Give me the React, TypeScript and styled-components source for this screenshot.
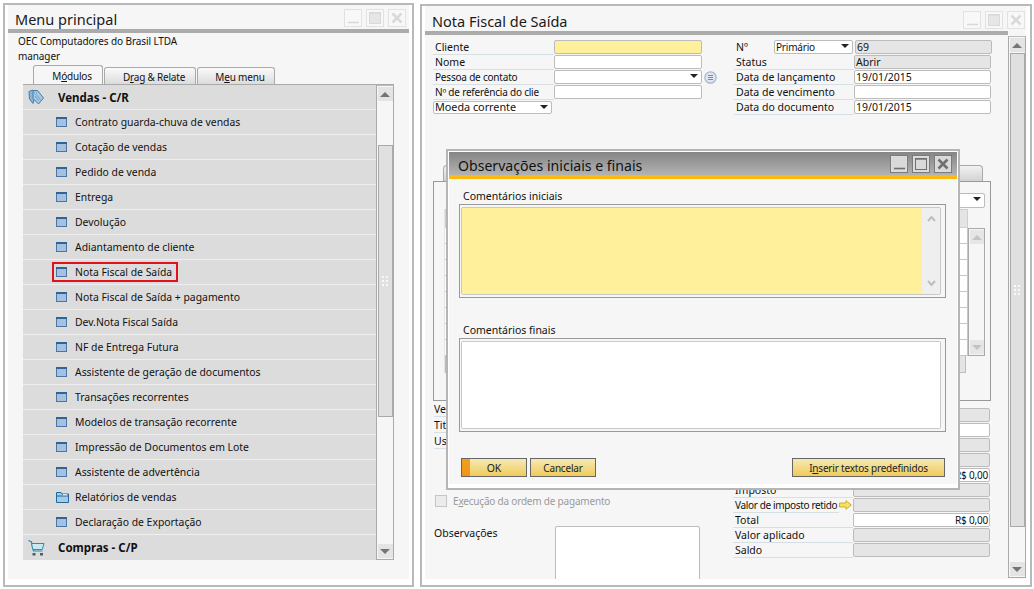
import React from 'react';
import styled, { createGlobalStyle } from 'styled-components';

const GlobalStyle = createGlobalStyle`
  html, body {
    margin: 0;
    padding: 0;
    background: #fff;
  }
  *, *::before, *::after {
    box-sizing: border-box;
  }
  #root {
    width: 1034px;
    height: 589px;
    overflow: hidden;
  }
`;

const menuItems = [
  'Contrato guarda-chuva de vendas',
  'Cotação de vendas',
  'Pedido de venda',
  'Entrega',
  'Devolução',
  'Adiantamento de cliente',
  'Nota Fiscal de Saída',
  'Nota Fiscal de Saída + pagamento',
  'Dev.Nota Fiscal Saída',
  'NF de Entrega Futura',
  'Assistente de geração de documentos',
  'Transações recorrentes',
  'Modelos de transação recorrente',
  'Impressão de Documentos em Lote',
  'Assistente de advertência',
  'Relatórios de vendas',
  'Declaração de Exportação',
];

const WindowGlyph = () => (
  <svg width="11" height="10" viewBox="0 0 11 10">
    <rect x="0.5" y="0.5" width="10" height="9" fill="#a5c1df" stroke="#4b76a3" />
    <rect x="0" y="0" width="11" height="2" fill="#2f6496" />
  </svg>
);

const FolderGlyph = () => (
  <svg width="13" height="11" viewBox="0 0 13 11">
    <path d="M0.5 10.5V0.5H5L6 2H12.5V10.5Z" fill="#a5c9e6" stroke="#1f6a9c" />
    <path d="M1 4H12" stroke="#1f6a9c" />
    <path d="M7 2.8H11" stroke="#fff" />
  </svg>
);

const TagsGlyph = () => (
  <svg width="16" height="16" viewBox="0 0 16 16">
    <path d="M1 2.5L5 1L8 4L5 14.5L1.5 10Z" fill="#8fb3d3" stroke="#3f7fae" />
    <path d="M5 1.5L9.5 1.5L15.5 9L10.5 15L5 9.5Z" fill="#a9c8e2" stroke="#3f7fae" />
    <circle cx="7.5" cy="4" r="1" fill="#fff" stroke="#3f7fae" strokeWidth="0.6" />
    <path d="M7 7L11 12M8.5 6L12.5 10.5" stroke="#5f96bf" strokeWidth="0.8" />
  </svg>
);

const CartGlyph = () => (
  <svg width="17" height="16" viewBox="0 0 17 16">
    <path d="M0.5 0.5L3.5 2L5.5 11H14.5" fill="none" stroke="#1f93b5" strokeWidth="1.2" />
    <path d="M3.5 3.5H16L14.3 9.5H4.8Z" fill="#cfe6ee" stroke="#1f93b5" />
    <rect x="4.5" y="13" width="3" height="2.5" fill="#4b5f68" />
    <rect x="12" y="13" width="3" height="2.5" fill="#4b5f68" />
  </svg>
);

const ArrowGlyph = () => (
  <svg width="13" height="10" viewBox="0 0 13 10">
    <path d="M0.5 3H7V0.7L12.3 5L7 9.3V7H0.5Z" fill="#f6e25c" stroke="#d3ad2b" />
  </svg>
);

const SmallChevron = ({ down }: { down?: boolean }) => (
  <svg width="9" height="7" viewBox="0 0 9 7">
    <path d={down ? 'M1 1L4.5 5L8 1' : 'M1 6L4.5 2L8 6'} fill="none" stroke="#bdbdbd" strokeWidth="2" />
  </svg>
);

const ListGlyph = () => (
  <svg width="13" height="13" viewBox="0 0 13 13">
    <circle cx="6.5" cy="6.5" r="5.7" fill="#dfe6f2" stroke="#a9b7cf" strokeWidth="1.2" />
    <path d="M4 4.5H9M4 6.5H9M4 8.5H9" stroke="#7d8aa0" />
  </svg>
);

const WindowButtons = ({ active }: { active?: boolean }) => (
  <ButtonRow>
    <WindowButton $active={active}>
      <svg width="14" height="14" viewBox="0 0 14 14">
        <path d="M2 11.5H13" stroke="currentColor" strokeWidth="1.6" />
      </svg>
    </WindowButton>
    <WindowButton $active={active}>
      <svg width="14" height="14" viewBox="0 0 14 14">
        <rect x="1.5" y="1.5" width="11" height="11" fill={active ? 'none' : '#e6e6e6'} stroke="currentColor" />
        <path d="M1.5 2H12.5" stroke="currentColor" strokeWidth="1.4" />
      </svg>
    </WindowButton>
    <WindowButton $active={active}>
      <svg width="14" height="14" viewBox="0 0 14 14">
        <path d="M2.5 2.5L11.5 11.5M11.5 2.5L2.5 11.5" stroke="currentColor" strokeWidth="2.6" />
      </svg>
    </WindowButton>
  </ButtonRow>
);

const Scroll = ({
  thumbTop,
  thumbHeight,
  grip,
}: {
  thumbTop: number;
  thumbHeight: number;
  grip?: boolean;
}) => (
  <ScrollRail>
    <ScrollButton>
      <ArrowUp />
    </ScrollButton>
    <ScrollThumb $top={thumbTop} $height={thumbHeight}>
      {grip && <Grip />}
    </ScrollThumb>
    <ScrollSpring />
    <ScrollButton>
      <ArrowDown />
    </ScrollButton>
  </ScrollRail>
);

const MainMenu = () => (
  <MenuWindow>
    <Panel>
      <TitleBar>
        <Title>Menu principal</Title>
        <WindowButtons />
      </TitleBar>
      <MenuHead>
        <div>OEC Computadores do Brasil LTDA</div>
        <div>manager</div>
      </MenuHead>
      <TabStrip>
        <MenuTab $active $width={70}>
          <Tight>
            M<u>ó</u>dulos
          </Tight>
        </MenuTab>
        <MenuTab $width={92}>
          <Tight>
            D<u>r</u>ag &amp; Relate
          </Tight>
        </MenuTab>
        <MenuTab $width={78}>
          <Tight>
            M<u>e</u>u menu
          </Tight>
        </MenuTab>
      </TabStrip>
      <ListFrame>
        <MenuList>
          <SectionRow>
            <SectionIcon>
              <TagsGlyph />
            </SectionIcon>
            Vendas - C/R
          </SectionRow>
          {menuItems.map((item, index) => (
            <MenuRow key={item}>
              <MenuLabel $marked={index === 6}>
                <MenuIcon>{item === 'Relatórios de vendas' ? <FolderGlyph /> : <WindowGlyph />}</MenuIcon>
                {item}
              </MenuLabel>
            </MenuRow>
          ))}
          <SectionRow>
            <SectionIcon>
              <CartGlyph />
            </SectionIcon>
            Compras - C/P
          </SectionRow>
        </MenuList>
        <Scroll thumbTop={44} thumbHeight={272} grip />
      </ListFrame>
    </Panel>
  </MenuWindow>
);

const InvoiceWindow = () => (
  <DocWindow>
    <DocPanel>
      <DocMain>
        <TitleBar $ruleRight={20}>
          <Title>Nota Fiscal de Saída</Title>
          <WindowButtons />
        </TitleBar>
        <TopForm>
          <FormColumn $width={301}>
            <FormRow>
              <FieldLabel $width={121}>Cliente</FieldLabel>
              <Field $width={148} $tone="yellow" />
            </FormRow>
            <FormRow>
              <FieldLabel $width={121}>Nome</FieldLabel>
              <Field $width={148} />
            </FormRow>
            <FormRow>
              <FieldLabel $width={121}>
                <Tight>Pessoa de contato</Tight>
              </FieldLabel>
              <Field $width={148}>
                <Caret />
              </Field>
              <ContactIcon>
                <ListGlyph />
              </ContactIcon>
            </FormRow>
            <FormRow>
              <FieldLabel $width={121}>
                <Tight>Nº de referência do clie</Tight>
              </FieldLabel>
              <Field $width={148} />
            </FormRow>
            <FormRow>
              <CurrencySelect>
                Moeda corrente
                <Caret />
              </CurrencySelect>
            </FormRow>
          </FormColumn>
          <FormColumn $width={260}>
            <FormRow>
              <FieldLabel $width={40} $plain>
                Nº
              </FieldLabel>
              <Field $width={79}>
                <Tight>Primário</Tight>
                <Caret />
              </Field>
              <Field $width={137} $tone="gray" $gap>
                69
              </Field>
            </FormRow>
            <FormRow>
              <FieldLabel $width={120}>Status</FieldLabel>
              <Field $width={137} $tone="gray">
                Abrir
              </Field>
            </FormRow>
            <FormRow>
              <FieldLabel $width={120}>Data de lançamento</FieldLabel>
              <Field $width={137}>19/01/2015</Field>
            </FormRow>
            <FormRow>
              <FieldLabel $width={120}>Data de vencimento</FieldLabel>
              <Field $width={137} />
            </FormRow>
            <FormRow>
              <FieldLabel $width={120}>Data do documento</FieldLabel>
              <Field $width={137}>19/01/2015</Field>
            </FormRow>
          </FormColumn>
        </TopForm>
        <TabsBlock>
          <BackTabs>
            <BackTab $width={80} />
            <BackTab $width={60} />
          </BackTabs>
          <BackFrame>
            <FrameSelect>
              <Caret />
            </FrameSelect>
            <GridRow>
              <GridTable>
                <GridHead />
                {Array.from({ length: 8 }, (_, i) => (
                  <GridLine key={i} />
                ))}
                <GridFoot />
              </GridTable>
              <GridScroll>
                <GridScrollButton>
                  <ArrowUp $light />
                </GridScrollButton>
                <GridScrollButton>
                  <ArrowDown $light />
                </GridScrollButton>
              </GridScroll>
            </GridRow>
          </BackFrame>
        </TabsBlock>
        <LowerForm>
          <LowerLeft>
            <ShortRow>Ve</ShortRow>
            <ShortRow>Tit</ShortRow>
            <ShortRow>Us</ShortRow>
            <PaymentRow>
              <CheckBox />
              <Tight>
                E<u>x</u>ecução da ordem de pagamento
              </Tight>
            </PaymentRow>
            <NotesRow>
              <NotesLabel>Observações</NotesLabel>
              <NotesBox />
            </NotesRow>
          </LowerLeft>
          <LowerRight>
            <FormRow>
              <FieldLabel $width={120} />
              <Field $width={137} $tone="gray" />
            </FormRow>
            <FormRow>
              <FieldLabel $width={120} />
              <Field $width={137} />
            </FormRow>
            <FormRow>
              <FieldLabel $width={120} />
              <Field $width={137} $tone="gray" />
            </FormRow>
            <FormRow>
              <FieldLabel $width={120} />
              <Field $width={137} $tone="gray" />
            </FormRow>
            <FormRow>
              <FieldLabel $width={120} />
              <Field $width={137} $align="right">
                <Tight>R$ 0,00</Tight>
              </Field>
            </FormRow>
            <FormRow>
              <FieldLabel $width={120}>Imposto</FieldLabel>
              <Field $width={137} $tone="gray" />
            </FormRow>
            <FormRow>
              <FieldLabel $width={106}>
                <Narrow>Valor de imposto retido</Narrow>
              </FieldLabel>
              <LinkArrow>
                <ArrowGlyph />
              </LinkArrow>
              <Field $width={137} $tone="gray" />
            </FormRow>
            <FormRow>
              <FieldLabel $width={120}>Total</FieldLabel>
              <Field $width={137} $align="right">
                <Tight>R$ 0,00</Tight>
              </Field>
            </FormRow>
            <FormRow>
              <FieldLabel $width={120}>Valor aplicado</FieldLabel>
              <Field $width={137} $tone="gray" />
            </FormRow>
            <FormRow>
              <FieldLabel $width={120}>Saldo</FieldLabel>
              <Field $width={137} $tone="gray" />
            </FormRow>
          </LowerRight>
        </LowerForm>
      </DocMain>
      <PageScroll>
        <Scroll thumbTop={1} thumbHeight={474} grip />
      </PageScroll>
    </DocPanel>
    <Dialog>
      <DialogTitle>
        <DialogHeading>Observações iniciais e finais</DialogHeading>
        <WindowButtons active />
      </DialogTitle>
      <DialogBody>
        <BoxLabel>Comentários iniciais</BoxLabel>
        <TextBox>
          <TextBoxInner>
            <TextArea $tone="yellow" />
            <TextScroll>
              <SmallChevron />
              <SmallChevron down />
            </TextScroll>
          </TextBoxInner>
        </TextBox>
        <BoxLabel $spaced>Comentários finais</BoxLabel>
        <TextBox>
          <TextBoxInner>
            <TextArea />
          </TextBoxInner>
        </TextBox>
        <DialogActions>
          <ActionGroup>
            <ActionButton $primary $width={66}>
              OK
            </ActionButton>
            <ActionButton $width={66}>
              <Tight>Cancelar</Tight>
            </ActionButton>
          </ActionGroup>
          <ActionButton $width={153}>
            <Tight>
              I<u>n</u>serir textos predefinidos
            </Tight>
          </ActionButton>
        </DialogActions>
      </DialogBody>
    </Dialog>
  </DocWindow>
);

export default function App() {
  return (
    <>
      <GlobalStyle />
      <Desktop>
        <MainMenu />
        <InvoiceWindow />
      </Desktop>
    </>
  );
}

const uiFont = `"Noto Sans", "Open Sans", sans-serif`;

const Desktop = styled.div`
  width: 1034px;
  height: 589px;
  display: flex;
  align-items: flex-end;
  gap: 6px;
  padding: 0 2px 2px 3px;
  font-family: ${uiFont};
  font-size: 10.5px;
  color: #111;
`;

const Tight = styled.span`
  font-size: 10px;
  letter-spacing: -0.2px;
`;

const Narrow = styled(Tight)`
  letter-spacing: -0.35px;
`;

const MenuWindow = styled.section`
  width: 411px;
  height: 584px;
  border: 2px solid #b9b9b9;
  background: #fff;
  padding: 0 3px 6px 3px;
`;

const DocWindow = styled.section`
  position: relative;
  width: 612px;
  height: 583px;
  border: 2px solid #b9b9b9;
  background: #fff;
  padding: 0 4px 6px 3px;
`;

const Panel = styled.div`
  height: 100%;
  background: #f6f6f6;
`;

const DocPanel = styled.div`
  height: 100%;
  display: flex;
  background: #f6f6f6;
`;

const DocMain = styled.div`
  width: 583px;
  flex: none;
  height: 100%;
  display: flex;
  flex-direction: column;
`;

const TitleBar = styled.header<{ $ruleRight?: number }>`
  height: ${({ $ruleRight }) => ($ruleRight ? 25 : 24)}px;
  flex: none;
  margin-right: ${({ $ruleRight }) => ($ruleRight ? -$ruleRight : 0)}px;
  position: relative;
  display: flex;
  align-items: center;
  justify-content: space-between;
  padding: 2px 3px 0 7px;

  &::after {
    content: '';
    position: absolute;
    left: 0;
    right: ${({ $ruleRight }) => $ruleRight ?? 0}px;
    bottom: -4px;
    height: 4px;
    background: #ababab;
  }
`;

const Title = styled.h1`
  margin: 0;
  padding-top: 2px;
  font-size: 14.5px;
  font-weight: 400;
  color: #1a1a1a;
`;

const ButtonRow = styled.div`
  display: flex;
  gap: 4px;
`;

const WindowButton = styled.span<{ $active?: boolean }>`
  width: 18px;
  height: 18px;
  display: flex;
  align-items: center;
  justify-content: center;
  border: 1px solid ${({ $active }) => ($active ? '#7a7a7a' : '#e2e2e2')};
  outline: ${({ $active }) => ($active ? '1px solid #ddd' : 'none')};
  outline-offset: -2px;
  background: ${({ $active }) => ($active ? '#d9d9d9' : '#f8f8f8')};
  color: ${({ $active }) => ($active ? '#6f6f6f' : '#d9d9d9')};
`;

const MenuHead = styled.div`
  padding: 5px 0 0 10px;
  height: 37px;
  line-height: 15px;
  font-size: 10px;
  letter-spacing: -0.1px;
`;

const TabStrip = styled.nav`
  display: flex;
  gap: 1px;
  margin-left: 25px;
  align-items: flex-end;
  height: 18px;
`;

const MenuTab = styled.span<{ $active?: boolean; $width: number }>`
  width: ${({ $width }) => $width}px;
  height: ${({ $active }) => ($active ? 19 : 17)}px;
  text-align: center;
  padding-left: 8px;
  line-height: ${({ $active }) => ($active ? 20 : 18)}px;
  border: 1px solid #a9a9a9;
  border-bottom: none;
  border-radius: 3px 3px 0 0;
  background: ${({ $active }) => ($active ? '#f6f6f6' : 'linear-gradient(#fafafa, #dcdcdc)')};
  position: relative;
  z-index: ${({ $active }) => ($active ? 1 : 0)};
`;

const ListFrame = styled.div`
  display: flex;
  width: 371px;
  height: 476px;
  margin-left: 15px;
  border-top: 1px solid #a9a9a9;
`;

const MenuList = styled.div`
  width: 353px;
  flex: none;
  background: #dcdcdc;
  font-size: 10.4px;
`;

const SectionRow = styled.div`
  height: 25px;
  display: flex;
  align-items: center;
  font-size: 11.5px;
  font-weight: 700;
  border-bottom: 1px solid #efefef;

  &:last-child {
    border-bottom: none;
  }
`;

const SectionIcon = styled.span`
  width: 35px;
  padding-left: 5px;
  display: flex;
  align-items: center;
`;

const MenuRow = styled.div`
  height: 25px;
  display: flex;
  align-items: center;
  padding-left: 29px;
  border-bottom: 1px solid #efefef;
`;

const MenuLabel = styled.span<{ $marked?: boolean }>`
  position: relative;
  display: flex;
  align-items: center;
  padding-left: 4px;

  ${({ $marked }) =>
    $marked &&
    `&::after {
      content: '';
      position: absolute;
      left: 0;
      top: -3px;
      width: 126px;
      height: 20px;
      border: 2px solid #e2111b;
    }`}
`;

const MenuIcon = styled.span`
  width: 19px;
  display: flex;
  align-items: center;
`;

const ScrollRail = styled.div`
  width: 18px;
  flex: none;
  height: 100%;
  display: flex;
  flex-direction: column;
  align-items: center;
  padding: 1px 0;
  background: #f6f6f6;
  border: 1px solid #aaa;
  border-top-color: #bbb;
`;

const ScrollButton = styled.span`
  width: 15px;
  height: 14px;
  flex: none;
  display: flex;
  align-items: center;
  justify-content: center;
  background: #e4e4e4;
`;

const ArrowUp = styled.span<{ $light?: boolean }>`
  width: 0;
  height: 0;
  border-left: 5px solid transparent;
  border-right: 5px solid transparent;
  border-bottom: 5px solid ${({ $light }) => ($light ? '#c4c4c4' : '#757575')};
`;

const ArrowDown = styled.span<{ $light?: boolean }>`
  width: 0;
  height: 0;
  border-left: 5px solid transparent;
  border-right: 5px solid transparent;
  border-top: 5px solid ${({ $light }) => ($light ? '#c4c4c4' : '#757575')};
`;

const ScrollThumb = styled.div<{ $top: number; $height: number }>`
  width: 15px;
  flex: none;
  height: ${({ $height }) => $height}px;
  margin-top: ${({ $top }) => $top}px;
  border: 1px solid #a9a9a9;
  background: #e0e0e0;
  display: flex;
  align-items: center;
  justify-content: center;
`;

const Grip = styled.span`
  width: 8px;
  height: 12px;
  background: radial-gradient(circle, #f8f8f8 0 1.2px, transparent 1.3px) 0 0 / 4px 4px;
`;

const ScrollSpring = styled.div`
  flex: 1;
`;

const PageScroll = styled.div`
  width: 18px;
  flex: none;
  height: 542px;
  margin-top: 30px;
`;

const TopForm = styled.div`
  display: flex;
  flex: none;
  padding: 9px 0 0 8px;
  height: 78px;
`;

const FormColumn = styled.div<{ $width: number }>`
  width: ${({ $width }) => $width}px;
  display: flex;
  flex-direction: column;
`;

const FormRow = styled.div`
  height: 15px;
  display: flex;
  flex: none;
`;

const FieldLabel = styled.span<{ $width: number; $plain?: boolean }>`
  width: ${({ $width }) => $width}px;
  flex: none;
  height: 15px;
  line-height: 15px;
  padding-left: 2px;
  white-space: nowrap;
  overflow: hidden;
  border-bottom: 1px solid ${({ $plain }) => ($plain ? 'transparent' : '#d6dfe3')};
`;

const toneColors: Record<string, string> = {
  yellow: '#fff09c',
  gray: '#e5e5e5',
  white: '#fff',
};

const Field = styled.div<{
  $width: number;
  $tone?: 'yellow' | 'gray' | 'white';
  $align?: 'right';
  $gap?: boolean;
}>`
  position: relative;
  width: ${({ $width }) => $width}px;
  flex: none;
  height: 14px;
  line-height: 12px;
  padding: 0 1px;
  margin-left: ${({ $gap }) => ($gap ? 2 : 0)}px;
  border: 1px solid #bcbcbc;
  border-radius: 2px;
  text-align: ${({ $align }) => $align ?? 'left'};
  background: ${({ $tone }) => toneColors[$tone ?? 'white']};
  overflow: hidden;
`;

const Caret = styled.span`
  position: absolute;
  right: 3px;
  top: 3px;
  width: 0;
  height: 0;
  border-left: 4px solid transparent;
  border-right: 4px solid transparent;
  border-top: 4px solid #222;
`;

const ContactIcon = styled.span`
  margin-left: 2px;
  display: flex;
  align-items: center;
`;

const CurrencySelect = styled.div`
  position: relative;
  width: 119px;
  height: 13px;
  line-height: 10px;
  padding-left: 1px;
  margin: 1px 0 0 0;
  font-size: 10.8px;
  background: #fff;
  border: 1px solid #bcbcbc;
  border-radius: 2px;
`;

const TabsBlock = styled.div`
  height: 238px;
  flex: none;
  margin: 54px 0 0 8px;
  width: 558px;
`;

const BackTabs = styled.div`
  display: flex;
  justify-content: space-between;
  align-items: flex-end;
  height: 18px;
  padding: 0 8px 0 10px;
`;

const BackTab = styled.div<{ $width: number }>`
  width: ${({ $width }) => $width}px;
  height: 16px;
  border: 1px solid #a9a9a9;
  border-bottom: none;
  border-radius: 4px 4px 0 0;
  background: linear-gradient(#f2f2f2, #d2d2d2);
`;

const BackFrame = styled.div`
  height: 220px;
  border: 1px solid #999;
  padding: 11px 5px 0 10px;
  display: flex;
  flex-direction: column;
  align-items: flex-end;
`;

const FrameSelect = styled.div`
  position: relative;
  width: 100px;
  height: 15px;
  background: #fff;
  border: 1px solid #bcbcbc;
  border-radius: 2px;
`;

const GridRow = styled.div`
  display: flex;
  width: 100%;
  margin-top: 1px;
`;

const GridTable = styled.div`
  flex: 1;
  border-left: 1px solid #e4e4e4;
`;

const GridHead = styled.div`
  height: 19px;
  background: #e4e4e4;
  border: 1px solid #cfcfcf;
`;

const GridLine = styled.div`
  height: 16px;
  background: #fff;
  border-bottom: 1px solid #c6c6c6;
  border-right: 1px solid #c6c6c6;
`;

const GridFoot = styled.div`
  height: 17px;
  margin-right: 2px;
  background: #e4e4e4;
  border: 1px solid #bcbcbc;
  border-top: none;
`;

const GridScroll = styled.div`
  width: 17px;
  height: 128px;
  margin-top: 19px;
  padding: 1px;
  border: 1px solid #a9a9a9;
  display: flex;
  flex-direction: column;
  justify-content: space-between;
  align-items: center;
`;

const GridScrollButton = styled.span`
  width: 14px;
  height: 14px;
  display: flex;
  align-items: center;
  justify-content: center;
  background: #e6e6e6;
`;

const LowerForm = styled.div`
  flex: 1;
  min-height: 0;
  overflow: hidden;
  display: flex;
  padding-left: 9px;
`;

const LowerLeft = styled.div`
  width: 299px;
  flex: none;
`;

const ShortRow = styled.div`
  width: 12px;
  height: 16px;
  line-height: 17px;
  white-space: nowrap;
  border-bottom: 1px solid #d6dfe3;
`;

const PaymentRow = styled.label`
  display: flex;
  align-items: center;
  gap: 6px;
  height: 12px;
  margin: 46px 0 0 1px;
  color: #9a9a9a;
`;

const CheckBox = styled.span`
  width: 12px;
  height: 12px;
  flex: none;
  border: 1px solid #c6c6c6;
  background: #ececec;
`;

const NotesRow = styled.div`
  display: flex;
  margin-top: 19px;
`;

const NotesLabel = styled.span`
  width: 121px;
  flex: none;
  line-height: 14px;
`;

const NotesBox = styled.div`
  width: 145px;
  height: 60px;
  background: #fff;
  border: 1px solid #bcbcbc;
  border-radius: 2px;
`;

const LowerRight = styled.div`
  margin-top: 7px;
  display: flex;
  flex-direction: column;
`;

const LinkArrow = styled.span`
  width: 14px;
  flex: none;
  display: flex;
  align-items: center;
  padding-bottom: 2px;
`;

const Dialog = styled.div`
  position: absolute;
  left: 24px;
  top: 143px;
  width: 514px;
  height: 341px;
  border: 2px solid #b5b5b5;
  background: #fff;
  padding: 1px;
  display: flex;
  flex-direction: column;
`;

const DialogTitle = styled.div`
  height: 27px;
  flex: none;
  display: flex;
  align-items: center;
  justify-content: space-between;
  padding: 0 5px 0 9px;
  background: linear-gradient(#858585, #b3b3b3);
  border-bottom: 4px solid #fdb913;
`;

const DialogHeading = styled.h2`
  margin: 0;
  padding-top: 3px;
  font-size: 14.1px;
  font-weight: 400;
  color: #111;
`;

const DialogBody = styled.div`
  flex: 1;
  display: flex;
  flex-direction: column;
  padding: 0 11px 0 10px;
  background: #f6f6f6;
  margin-bottom: 3px;
`;

const BoxLabel = styled.div<{ $spaced?: boolean }>`
  height: 14px;
  line-height: 14px;
  margin: ${({ $spaced }) => ($spaced ? '25px' : '10px')} 0 1px 4px;
`;

const TextBox = styled.div`
  height: 94px;
  flex: none;
  border: 1px solid #999;
  padding: 2px 4px 2px 1px;
`;

const TextBoxInner = styled.div`
  height: 100%;
  display: flex;
  border: 1px solid #c8c8c8;
  border-radius: 2px;
`;

const TextArea = styled.div<{ $tone?: 'yellow' }>`
  flex: 1;
  background: ${({ $tone }) => ($tone ? '#fff09c' : '#fff')};
`;

const TextScroll = styled.div`
  width: 18px;
  flex: none;
  background: #efefef;
  display: flex;
  flex-direction: column;
  justify-content: space-between;
  align-items: center;
  padding: 7px 0;
`;

const DialogActions = styled.div`
  display: flex;
  justify-content: space-between;
  margin-top: 26px;
  padding: 0 1px 0 2px;
`;

const ActionGroup = styled.div`
  display: flex;
  gap: 3px;
`;

const ActionButton = styled.button<{ $primary?: boolean; $width: number }>`
  width: ${({ $width }) => $width}px;
  height: 19px;
  padding: 0;
  font: inherit;
  color: #222;
  border: 1px solid #666;
  background: ${({ $primary }) =>
    $primary
      ? 'linear-gradient(#f39f1c, #f0941a) left / 8px 100% no-repeat, linear-gradient(#f7e9b5, #efcb5a)'
      : 'linear-gradient(#f7e9b5, #efcb5a)'};
`;
